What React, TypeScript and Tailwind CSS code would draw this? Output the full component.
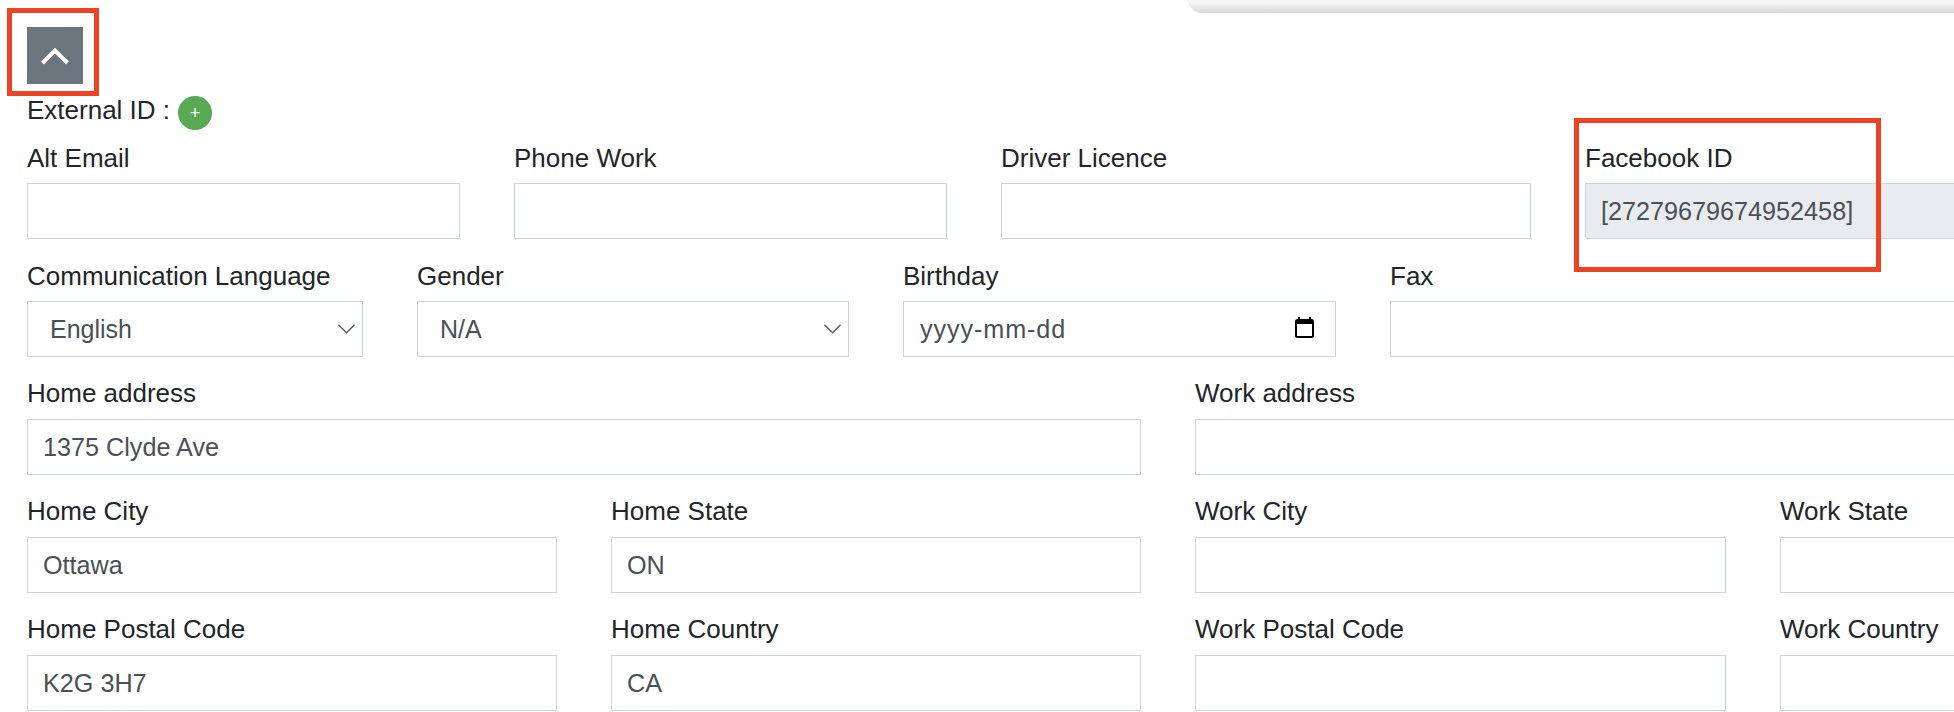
const labelClass = "block text-[26px] leading-[30px] mb-[10px] text-[#212529] whitespace-nowrap";
const inputBase =
  "block w-full h-14 border border-[#ced4da] pr-4 text-[25.2px] text-[#495057] outline-none font-['Liberation_Sans',sans-serif]";

interface FieldProps {
  label: string;
  value?: string;
  className: string;
  disabled?: boolean;
}

const Field = ({ label, value = "", className, disabled }: FieldProps) => (
  <div className={className}>
    <label className={labelClass}>{label}</label>
    <input
      readOnly
      value={value}
      className={disabled ? inputBase + " pl-[15px] bg-[#e9ecef]" : inputBase + " pl-[15px] bg-white"}
    />
  </div>
);

const SelectField = ({ label, value, className }: FieldProps) => (
  <div className={className}>
    <label className={labelClass}>{label}</label>
    <div className="relative">
      <select
        defaultValue={value}
        className="block w-full h-14 appearance-none rounded-none border border-[#ced4da] bg-white pl-[22px] pt-[2px] text-[25px] text-[#495057] outline-none"
      >
        <option>{value}</option>
      </select>
      <svg
        className="absolute right-2 top-[23px]"
        width="17"
        height="10"
        viewBox="0 0 17 10"
        fill="none"
        stroke="#5a5f64"
        strokeWidth="1.5"
      >
        <path d="M0.5 0.7 8.5 8.7 16.5 0.7" />
      </svg>
    </div>
  </div>
);

const DateField = ({ label, value, className }: FieldProps) => (
  <div className={className}>
    <label className={labelClass}>{label}</label>
    <div className="relative">
      <input readOnly value={value} className={inputBase + " pl-4 bg-white tracking-[0.9px]"} />
      <svg
        className="absolute right-[22px] top-[16px]"
        width="19"
        height="21"
        viewBox="0 0 19 21"
        fill="none"
      >
        <path d="M4 0v3M15 0v3" stroke="#000" strokeWidth="2" />
        <rect x="1" y="3" width="17" height="17" rx="1.5" stroke="#000" strokeWidth="2" />
        <path d="M1 3.5h17V7H1z" fill="#000" />
      </svg>
    </div>
  </div>
);

const App = () => {
  return (
    <div className="relative h-[712px] w-[1954px] overflow-hidden bg-white font-['Liberation_Sans',sans-serif]">
      {/* panel poking in from the top */}
      <div className="absolute left-[1188px] top-[-20px] h-[33px] w-[800px] rounded-bl-[14px] bg-gradient-to-b from-[#f5f5f5] from-[70%] to-[#d8d8d8]" />

      <div className="pl-[27px] pt-[27px]">
        <button className="flex h-[57px] w-14 items-center justify-center bg-[#6c757d]">
          <svg width="28" height="18" viewBox="0 0 28 18" fill="none" stroke="#fff" strokeWidth="4">
            <path d="M1.5 16 14 3.5 26.5 16" />
          </svg>
        </button>

        <div className="mt-[11px] mb-[13px] flex items-start gap-2">
          <span className="text-[26px] leading-[30px] text-[#212529]">External ID :</span>
          <span className="mt-px flex h-[34px] w-[34px] items-center justify-center rounded-full bg-[#58a854] text-[18px] leading-none text-white">
            +
          </span>
        </div>

        <div className="flex w-[2400px] gap-[54px] pb-[22px]">
          <Field label="Alt Email" className="w-[433px]" />
          <Field label="Phone Work" className="w-[433px]" />
          <Field label="Driver Licence" className="w-[530px]" />
          <Field label="Facebook ID" value="[27279679674952458]" className="w-[530px]" disabled />
        </div>

        <div className="flex w-[2400px] gap-[54px] pb-[22px]">
          <SelectField label="Communication Language" value="English" className="w-[336px]" />
          <SelectField label="Gender" value="N/A" className="w-[432px]" />
          <DateField label="Birthday" value="yyyy-mm-dd" className="w-[433px]" />
          <Field label="Fax" className="w-[800px]" />
        </div>

        <div className="flex w-[2400px] gap-[54px] pb-[22px] [&_label]:-translate-y-px">
          <Field label="Home address" value="1375 Clyde Ave" className="w-[1114px]" />
          <Field label="Work address" className="w-[1114px]" />
        </div>

        <div className="flex w-[2400px] gap-[54px] pb-[22px] [&_label]:-translate-y-px">
          <Field label="Home City" value="Ottawa" className="w-[530px]" />
          <Field label="Home State" value="ON" className="w-[530px]" />
          <Field label="Work City" className="w-[531px]" />
          <Field label="Work State" className="w-[530px]" />
        </div>

        <div className="flex w-[2400px] gap-[54px] [&_label]:-translate-y-px">
          <Field label="Home Postal Code" value="K2G 3H7" className="w-[530px]" />
          <Field label="Home Country" value="CA" className="w-[530px]" />
          <Field label="Work Postal Code" className="w-[531px]" />
          <Field label="Work Country" className="w-[530px]" />
        </div>
      </div>

      {/* red annotation boxes */}
      <div className="absolute left-[7px] top-[8px] h-[88px] w-[92px] border-[5px] border-[#ee4224]" />
      <div className="absolute left-[1574px] top-[118px] h-[154px] w-[307px] border-[5px] border-[#ee4224]" />
    </div>
  );
};

export default App;
